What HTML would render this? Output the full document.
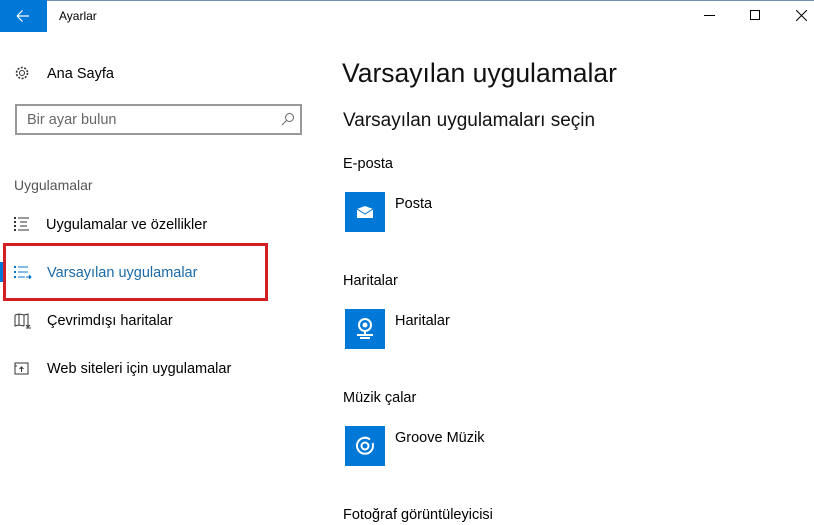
<!DOCTYPE html>
<html><head><meta charset="utf-8"><style>
*{margin:0;padding:0;box-sizing:border-box}
body{width:814px;height:525px;background:#fff;font-family:"Liberation Sans",sans-serif;color:#000;position:relative;overflow:hidden}
.a{position:absolute;white-space:nowrap}
.t{font-size:14px}
.tile{position:absolute;left:345px;width:40px;height:40px;background:#0078d7}
</style></head><body>
<div class="a" style="left:0;top:0;width:814px;height:1px;background:#6b8fb5"></div>
<div class="a" style="left:0;top:0;width:47px;height:32px;background:#0078d7"></div>
<svg class="a" style="left:16px;top:9px" width="14" height="14" viewBox="0 0 14 14"><path d="M1 7H13M1 7L6.5 1.5M1 7L6.5 12.5" stroke="#fff" stroke-width="1.2" fill="none"/></svg>
<div class="a" style="left:59px;top:9px;font-size:12px">Ayarlar</div>
<div class="a" style="left:704px;top:15px;width:11px;height:1px;background:#000"></div>
<div class="a" style="left:750px;top:10px;width:10px;height:10px;border:1px solid #000"></div>
<svg class="a" style="left:796px;top:10px" width="11" height="11"><path d="M0 0L11 11M11 0L0 11" stroke="#000" stroke-width="1"/></svg>

<svg class="a" style="left:14px;top:65px" width="16" height="16" viewBox="0 0 16 16"><circle cx="8" cy="8" r="2.5" fill="none" stroke="#333"/><circle cx="8" cy="8" r="5.5" fill="none" stroke="#333" stroke-width="1.6" stroke-dasharray="2 1.5"/></svg>
<div class="a t" style="left:47px;top:66px;font-size:14.5px">Ana Sayfa</div>
<div class="a" style="left:15px;top:104px;width:287px;height:31px;border:2px solid #999"></div>
<div class="a" style="left:27px;top:112px;font-size:14.5px;color:#666">Bir ayar bulun</div>
<svg class="a" style="left:281px;top:112px" width="14" height="14"><circle cx="8.5" cy="5.5" r="4" fill="none" stroke="#666"/><path d="M5.5 8.5L1 13" stroke="#666"/></svg>
<div class="a" style="left:14px;top:177px;font-size:14px;color:#555">Uygulamalar</div>

<svg class="a" style="left:14px;top:216px" width="16" height="16"><g fill="#333"><rect x="0" y="1" width="2" height="2"/><rect x="0" y="5" width="2" height="2"/><rect x="0" y="9" width="2" height="2"/><rect x="0" y="13" width="2" height="2"/></g><g stroke="#333"><path d="M4 2h11M6 6h7M6 10h7M4 14h11"/></g></svg>
<div class="a t" style="left:46px;top:217px;font-size:14.5px">Uygulamalar ve özellikler</div>

<div class="a" style="left:0;top:262px;width:4px;height:20px;background:#0078d7"></div>
<div class="a" style="left:3px;top:243px;width:265px;height:58px;border:3px solid #d21f26"></div>
<svg class="a" style="left:14px;top:265px" width="18" height="14"><g fill="#0078d7"><rect x="0" y="1" width="2" height="2"/><rect x="0" y="6" width="2" height="2"/><rect x="0" y="11" width="2" height="2"/></g><g stroke="#0078d7"><path d="M4 2h10M4 7h10M4 12h7M12 12h5M15 10l2 2-2 2"/></g></svg>
<div class="a t" style="left:47px;top:265px;font-size:14.5px;color:#1a6aa8">Varsayılan uygulamalar</div>

<svg class="a" style="left:14px;top:313px" width="18" height="16"><path d="M1 2l4-1 5 1 4-1v9M1 2v11l4-1 5 1M5 1v11M10 2v11M14 9v5M12 12l2 2 2-2M12 15h5" fill="none" stroke="#333"/></svg>
<div class="a t" style="left:47px;top:313px;font-size:14.5px">Çevrimdışı haritalar</div>

<svg class="a" style="left:14px;top:362px" width="16" height="14"><path d="M1 1h13v11H1zM7.5 10V5M5.5 7l2-2 2 2M1 4h2" fill="none" stroke="#333"/></svg>
<div class="a t" style="left:47px;top:361px;font-size:14.5px">Web siteleri için uygulamalar</div>

<div class="a" style="left:342px;top:58px;font-size:26.5px;color:#111">Varsayılan uygulamalar</div>
<div class="a" style="left:343px;top:110px;font-size:19px;color:#111">Varsayılan uygulamaları seçin</div>
<div class="a t" style="left:343px;top:156px;font-size:14.5px">E-posta</div>
<div class="tile" style="top:192px"></div>
<svg class="a" style="left:357px;top:206px" width="16" height="12"><path d="M0 3L8 0 16 3V12H0Z" fill="#fff"/><path d="M0 3L8 8 16 3" stroke="#0078d7" fill="none"/></svg>
<div class="a t" style="left:395px;top:196px;font-size:14.5px">Posta</div>
<div class="a t" style="left:343px;top:273px;font-size:14.5px">Haritalar</div>
<div class="tile" style="top:309px"></div>
<svg class="a" style="left:354px;top:316px" width="22" height="26"><circle cx="11" cy="9" r="6" fill="none" stroke="#fff" stroke-width="2"/><circle cx="11" cy="9" r="2.5" fill="#fff"/><path d="M11 15v4M3 19h16M6 22h10" stroke="#fff" stroke-width="2"/></svg>
<div class="a t" style="left:395px;top:313px;font-size:14.5px">Haritalar</div>
<div class="a t" style="left:343px;top:390px;font-size:14.5px">Müzik çalar</div>
<div class="tile" style="top:426px"></div>
<svg class="a" style="left:355px;top:436px" width="20" height="20"><path d="M15 3.5A8 8 0 1 0 17.5 7" fill="none" stroke="#fff" stroke-width="2"/><circle cx="10" cy="10" r="3.5" fill="none" stroke="#fff" stroke-width="2"/></svg>
<div class="a t" style="left:395px;top:430px;font-size:14.5px">Groove Müzik</div>
<div class="a t" style="left:343px;top:507px;font-size:14.5px">Fotoğraf görüntüleyicisi</div>
</body></html>
